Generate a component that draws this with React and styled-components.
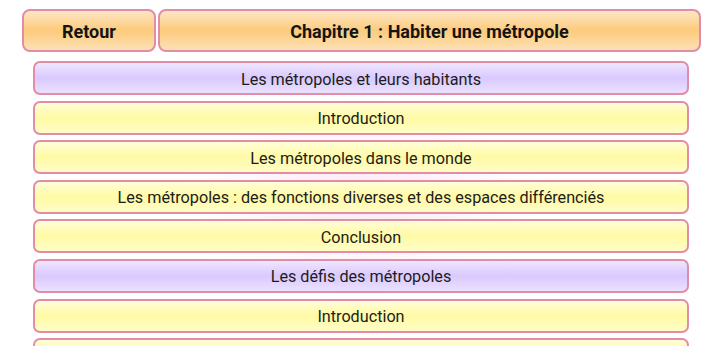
import React from "react";
import styled, { createGlobalStyle } from "styled-components";

const Global = createGlobalStyle`
  html, body { margin: 0; padding: 0; background: #ffffff; }
  body { font-family: Roboto, "Noto Sans", "Liberation Sans", sans-serif; color: #1a1a1a; }
`;

const Page = styled.div`
  width: 720px;
  height: 360px;
  background: radial-gradient(ellipse 260px 150px at 360px 200px, rgba(250, 215, 235, 0.55), rgba(255, 255, 255, 0) 70%), #ffffff;
  overflow: hidden;
`;

const Header = styled.div`
  display: flex;
  gap: 2px;
  padding: 9px 0 0 22px;
`;

const HeaderButton = styled.div`
  box-sizing: border-box;
  width: ${(p) => p.$w}px;
  height: 43px;
  padding-top: 2px;
  display: flex;
  align-items: center;
  justify-content: center;
  border: 2px solid #e38ca8;
  border-radius: 8px;
  background: linear-gradient(180deg, #fde6c4 0%, #fccb7c 50%, #fde0b6 100%);
  font-weight: 700;
  font-size: 18px;
  color: #141414;
`;

const List = styled.div`
  margin: 9px 0 0 33px;
  width: 656px;
  height: 285px;
  overflow: hidden;
  display: flex;
  flex-direction: column;
  gap: 5.6px;
`;

const themes = {
  section: "linear-gradient(180deg, #efe6ff 0%, #d9c9fd 50%, #ebe1ff 100%)",
  item: "linear-gradient(180deg, #fffed8 0%, #fffaa4 50%, #fffdc8 100%)",
};

const Row = styled.div`
  box-sizing: border-box;
  flex: 0 0 34px;
  padding-top: 2px;
  display: flex;
  align-items: center;
  justify-content: center;
  border: 2px solid #e38ca8;
  border-radius: 7px;
  background: ${(p) => themes[p.$kind]};
  font-size: 16.2px;
  color: #1c1c1c;
`;

const rows = [
  ["section", "Les métropoles et leurs habitants"],
  ["item", "Introduction"],
  ["item", "Les métropoles dans le monde"],
  ["item", "Les métropoles : des fonctions diverses et des espaces différenciés"],
  ["item", "Conclusion"],
  ["section", "Les défis des métropoles"],
  ["item", "Introduction"],
  ["item", ""],
];

export default function App() {
  return (
    <Page>
      <Global />
      <Header>
        <HeaderButton $w={134}>Retour</HeaderButton>
        <HeaderButton $w={543}>Chapitre 1 : Habiter une métropole</HeaderButton>
      </Header>
      <List>
        {rows.map(([kind, label], i) => (
          <Row key={i} $kind={kind}>{label}</Row>
        ))}
      </List>
    </Page>
  );
}
